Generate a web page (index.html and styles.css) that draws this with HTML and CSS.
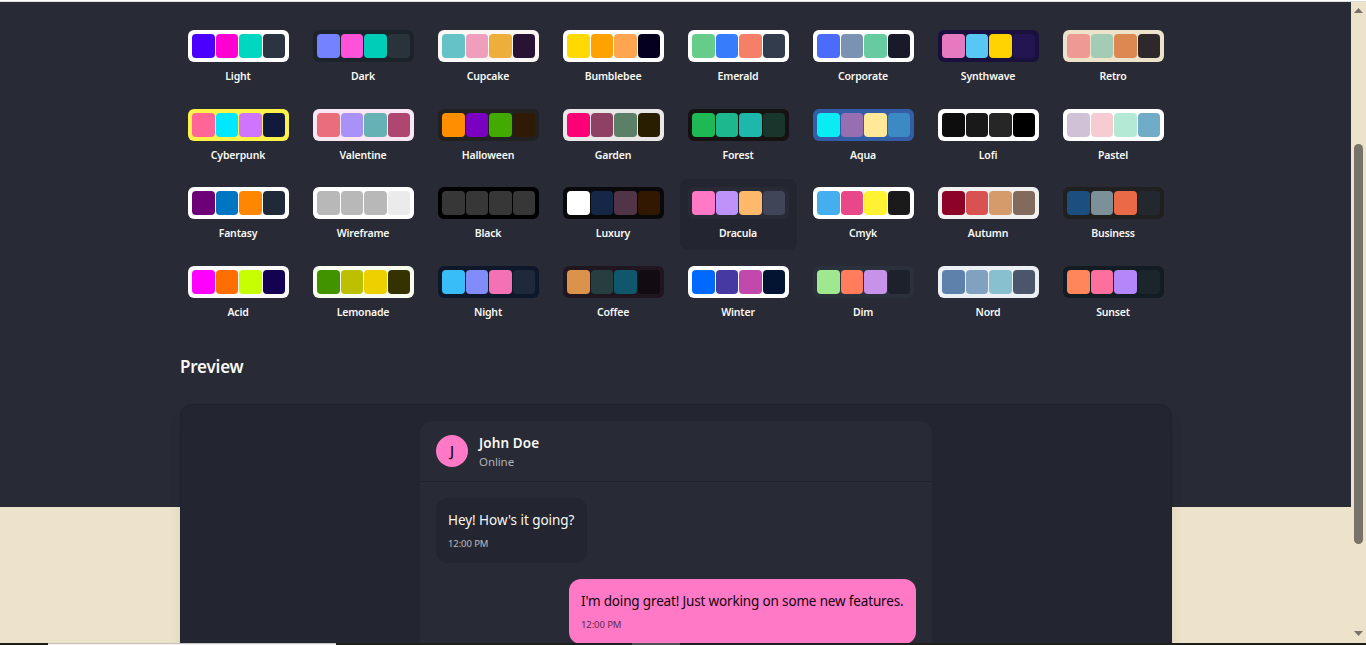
FILE: index.html
```html
<!DOCTYPE html>
<html lang="en">
<head>
<meta charset="utf-8">
<title>Theme settings</title>
<link rel="stylesheet" href="styles.css">
</head>
<body>
<div class="topline"></div>
<div class="window">
<div class="page">
<main class="settings">
<section class="themes">
<button class="theme light"><span class="swatch"><i></i><i></i><i></i><i></i></span><span class="label">Light</span></button>
<button class="theme dark"><span class="swatch"><i></i><i></i><i></i><i></i></span><span class="label">Dark</span></button>
<button class="theme cupcake"><span class="swatch"><i></i><i></i><i></i><i></i></span><span class="label">Cupcake</span></button>
<button class="theme bumblebee"><span class="swatch"><i></i><i></i><i></i><i></i></span><span class="label">Bumblebee</span></button>
<button class="theme emerald"><span class="swatch"><i></i><i></i><i></i><i></i></span><span class="label">Emerald</span></button>
<button class="theme corporate"><span class="swatch"><i></i><i></i><i></i><i></i></span><span class="label">Corporate</span></button>
<button class="theme synthwave"><span class="swatch"><i></i><i></i><i></i><i></i></span><span class="label">Synthwave</span></button>
<button class="theme retro"><span class="swatch"><i></i><i></i><i></i><i></i></span><span class="label">Retro</span></button>
<button class="theme cyberpunk"><span class="swatch"><i></i><i></i><i></i><i></i></span><span class="label">Cyberpunk</span></button>
<button class="theme valentine"><span class="swatch"><i></i><i></i><i></i><i></i></span><span class="label">Valentine</span></button>
<button class="theme halloween"><span class="swatch"><i></i><i></i><i></i><i></i></span><span class="label">Halloween</span></button>
<button class="theme garden"><span class="swatch"><i></i><i></i><i></i><i></i></span><span class="label">Garden</span></button>
<button class="theme forest"><span class="swatch"><i></i><i></i><i></i><i></i></span><span class="label">Forest</span></button>
<button class="theme aqua"><span class="swatch"><i></i><i></i><i></i><i></i></span><span class="label">Aqua</span></button>
<button class="theme lofi"><span class="swatch"><i></i><i></i><i></i><i></i></span><span class="label">Lofi</span></button>
<button class="theme pastel"><span class="swatch"><i></i><i></i><i></i><i></i></span><span class="label">Pastel</span></button>
<button class="theme fantasy"><span class="swatch"><i></i><i></i><i></i><i></i></span><span class="label">Fantasy</span></button>
<button class="theme wireframe"><span class="swatch"><i></i><i></i><i></i><i></i></span><span class="label">Wireframe</span></button>
<button class="theme black"><span class="swatch"><i></i><i></i><i></i><i></i></span><span class="label">Black</span></button>
<button class="theme luxury"><span class="swatch"><i></i><i></i><i></i><i></i></span><span class="label">Luxury</span></button>
<button class="theme dracula selected"><span class="swatch"><i></i><i></i><i></i><i></i></span><span class="label">Dracula</span></button>
<button class="theme cmyk"><span class="swatch"><i></i><i></i><i></i><i></i></span><span class="label">Cmyk</span></button>
<button class="theme autumn"><span class="swatch"><i></i><i></i><i></i><i></i></span><span class="label">Autumn</span></button>
<button class="theme business"><span class="swatch"><i></i><i></i><i></i><i></i></span><span class="label">Business</span></button>
<button class="theme acid"><span class="swatch"><i></i><i></i><i></i><i></i></span><span class="label">Acid</span></button>
<button class="theme lemonade"><span class="swatch"><i></i><i></i><i></i><i></i></span><span class="label">Lemonade</span></button>
<button class="theme night"><span class="swatch"><i></i><i></i><i></i><i></i></span><span class="label">Night</span></button>
<button class="theme coffee"><span class="swatch"><i></i><i></i><i></i><i></i></span><span class="label">Coffee</span></button>
<button class="theme winter"><span class="swatch"><i></i><i></i><i></i><i></i></span><span class="label">Winter</span></button>
<button class="theme dim"><span class="swatch"><i></i><i></i><i></i><i></i></span><span class="label">Dim</span></button>
<button class="theme nord"><span class="swatch"><i></i><i></i><i></i><i></i></span><span class="label">Nord</span></button>
<button class="theme sunset"><span class="swatch"><i></i><i></i><i></i><i></i></span><span class="label">Sunset</span></button>
</section>
<h3 class="heading"><span>Preview</span></h3>
<section class="preview">
<div class="chat">
<header class="chat-head">
<div class="avatar">J</div>
<div class="who"><span class="name">John Doe</span><span class="status">Online</span></div>
</header>
<div class="messages">
<div class="bubble"><span class="text">Hey! How's it going?</span><span class="time">12:00 PM</span></div>
<div class="bubble mine"><span class="text">I'm doing great! Just working on some new features.</span><span class="time">12:00 PM</span></div>
</div>
</div>
</section>
</main>
</div>
<aside class="scrollbar">
<svg width="9" height="5" viewBox="0 0 9 5"><path d="M4.5 0L9 5H0Z" fill="#78736a"/></svg>
<div class="track"><div class="thumb"></div></div>
<svg width="9" height="5" viewBox="0 0 9 5"><path d="M0 0H9L4.5 5Z" fill="#78736a"/></svg>
</aside>
</div>
<footer class="taskbar"><div class="task-search"></div><div class="task-active"></div></footer>
</body>
</html>
```
FILE: styles.css
```css
* { box-sizing: border-box; }
body {
  margin: 0;
  height: 645px;
  overflow: hidden;
  display: flex;
  flex-direction: column;
  background: #ece3ca;
  color: #f8f8f2;
  font-family: "Noto Sans", "Open Sans", sans-serif;
}
.topline { flex: none; height: 2px; background: #fff; border-bottom: 1px solid #dcdde0; }
.window { flex: none; height: 641px; display: flex; overflow: hidden; }
.page {
  width: 1351px;
  height: 641px;
  overflow: hidden;
  background: linear-gradient(#282a36 505px, #ece3ca 505px);
}
.settings { width: 992px; margin: 0 auto 0 180px; padding-top: 20px; }

/* Theme picker */
.themes { display: grid; grid-template-columns: repeat(8, 1fr); gap: 8px; }
.theme {
  display: flex;
  flex-direction: column;
  gap: 6px;
  height: 70.67px;
  padding: 8px;
  border: 0;
  border-radius: 8px;
  background: none;
  color: inherit;
  font: inherit;
}
.theme.selected { background: #232530; }
.swatch {
  width: 100%;
  height: 32px;
  padding: 4px;
  display: grid;
  grid-template-columns: repeat(4, 1fr);
  gap: 1px;
  border-radius: 6px;
  background: var(--base);
}
.swatch i { border-radius: 4px; }
.swatch i:nth-child(1) { background: var(--primary); }
.swatch i:nth-child(2) { background: var(--secondary); }
.swatch i:nth-child(3) { background: var(--accent); }
.swatch i:nth-child(4) { background: var(--neutral); }
.label {
  width: 100%;
  padding-right: 1px;
  text-align: center;
  font-size: 10.5px;
  line-height: 16.5px;
  font-weight: 600;
  letter-spacing: -0.17px;
}

.light { --base: #fff; --primary: #4b00ff; --secondary: #ff00d3; --accent: #00d7c0; --neutral: #2b3440; }
.dark { --base: #1d232a; --primary: #7582ff; --secondary: #ff52d9; --accent: #00cdb8; --neutral: #2a323c; }
.cupcake { --base: #faf7f5; --primary: #65c3c8; --secondary: #ef9fbc; --accent: #eeaf3a; --neutral: #291334; }
.bumblebee { --base: #fff; --primary: #ffd900; --secondary: #ffa200; --accent: #ffa552; --neutral: #05001f; }
.emerald { --base: #fff; --primary: #66cc8a; --secondary: #377cfb; --accent: #f68067; --neutral: #333c4d; }
.corporate { --base: #fff; --primary: #4b6bfb; --secondary: #7b92b2; --accent: #67cba0; --neutral: #181a2a; }
.synthwave { --base: #1a103d; --primary: #e779c1; --secondary: #58c7f3; --accent: #ffd200; --neutral: #221551; }
.retro { --base: #ece3ca; --primary: #ef9995; --secondary: #a4cbb4; --accent: #dc8850; --neutral: #2e282a; }
.cyberpunk { --base: #fff248; --primary: #ff6596; --secondary: #00e8ff; --accent: #ce74ff; --neutral: #111a3b; }
.valentine { --base: #fae7f4; --primary: #e96d7b; --secondary: #a991f7; --accent: #66b1b3; --neutral: #af4670; }
.halloween { --base: #212121; --primary: #ff8f00; --secondary: #7a00c2; --accent: #42aa00; --neutral: #2f1b05; }
.garden { --base: #e9e7e7; --primary: #fe0075; --secondary: #8e4162; --accent: #5c7f67; --neutral: #291e00; }
.forest { --base: #171212; --primary: #1eb854; --secondary: #1db88e; --accent: #1db8ab; --neutral: #19362d; }
.aqua { --base: #345da7; --primary: #09ecf3; --secondary: #966fb3; --accent: #ffe999; --neutral: #3b8ac4; }
.lofi { --base: #fff; --primary: #0d0d0d; --secondary: #1a1919; --accent: #262626; --neutral: #000; }
.pastel { --base: #fff; --primary: #d1c1d7; --secondary: #f6cbd1; --accent: #b4e9d6; --neutral: #70acc7; }
.fantasy { --base: #fff; --primary: #6d0076; --secondary: #0075c2; --accent: #ff8600; --neutral: #1f2937; }
.wireframe { --base: #fff; --primary: #b8b8b8; --secondary: #b8b8b8; --accent: #b8b8b8; --neutral: #ebebeb; }
.black { --base: #000; --primary: #373737; --secondary: #373737; --accent: #373737; --neutral: #373737; }
.luxury { --base: #09090b; --primary: #fff; --secondary: #152747; --accent: #513448; --neutral: #331800; }
.dracula { --base: #282a36; --primary: #ff79c6; --secondary: #bd93f9; --accent: #ffb86c; --neutral: #414558; }
.cmyk { --base: #fff; --primary: #45aeee; --secondary: #e8488a; --accent: #fff232; --neutral: #1a1a1a; }
.autumn { --base: #f1f1f1; --primary: #8c0327; --secondary: #d85251; --accent: #d59b6a; --neutral: #826a5c; }
.business { --base: #202020; --primary: #1c4e80; --secondary: #7c909a; --accent: #ea6947; --neutral: #23282f; }
.acid { --base: #fafafa; --primary: #ff00ff; --secondary: #ff6e00; --accent: #c8ff00; --neutral: #140151; }
.lemonade { --base: #f8fdef; --primary: #419400; --secondary: #bdc000; --accent: #edd000; --neutral: #343300; }
.night { --base: #0f172a; --primary: #38bdf8; --secondary: #818cf8; --accent: #f471b5; --neutral: #1e293b; }
.coffee { --base: #20161f; --primary: #db924b; --secondary: #263e3f; --accent: #10576d; --neutral: #120c12; }
.winter { --base: #fff; --primary: #0069ff; --secondary: #463aa2; --accent: #c148ac; --neutral: #021431; }
.dim { --base: #2a303c; --primary: #9fe88d; --secondary: #ff7d5c; --accent: #c792e9; --neutral: #1c212b; }
.nord { --base: #eceff4; --primary: #5e81ac; --secondary: #81a1c1; --accent: #88c0d0; --neutral: #4c566a; }
.sunset { --base: #121c22; --primary: #ff865b; --secondary: #fd6f9c; --accent: #b387fa; --neutral: #1b262c; }

/* Chat preview */
.heading {
  margin: 24px 0 23.33px;
  font-size: 17px;
  line-height: 28px;
  font-weight: 600;
  letter-spacing: -0.2px;
}
.preview {
  height: 420px;
  padding-top: 16px;
  border: 1px solid #20222c;
  border-radius: 12px;
  background: #232530;
  box-shadow: 0 10px 15px -3px rgba(0, 0, 0, .1), 0 4px 6px -4px rgba(0, 0, 0, .1);
}
.chat { width: 512px; height: 400px; margin: 0 auto; border-radius: 12px; background: #282a36; overflow: hidden; }
.chat-head {
  display: flex;
  align-items: center;
  gap: 11px;
  height: 61px;
  padding: 0 16px;
  border-bottom: 1px solid #20222c;
}
.avatar {
  width: 32px;
  height: 32px;
  border-radius: 50%;
  background: #ff79c6;
  color: #16050e;
  text-align: center;
  font-size: 14px;
  line-height: 32px;
  font-weight: 500;
}
.who { display: flex; flex-direction: column; align-items: flex-start; padding-top: 2px; }
.name { font-size: 13.5px; line-height: 20px; font-weight: 600; letter-spacing: 0.1px; }
.status { font-size: 11.5px; line-height: 17px; letter-spacing: -0.1px; color: #b0b1b3; }
.messages { display: flex; flex-direction: column; align-items: flex-start; gap: 16px; padding: 16px; }
.bubble {
  display: flex;
  flex-direction: column;
  align-items: flex-start;
  gap: 6px;
  width: 151px;
  height: 65px;
  padding: 12px;
  border-radius: 12px;
  background: #232530;
  white-space: nowrap;
}
.bubble.mine { align-self: flex-end; width: 347px; background: #ff79c6; color: #16050e; }
.text { font-size: 13.5px; line-height: 20px; letter-spacing: -0.05px; }
.mine .text { letter-spacing: -0.16px; }
.time { font-size: 9.5px; line-height: 15px; letter-spacing: -0.1px; opacity: .7; }

/* Window chrome */
.scrollbar {
  width: 15px;
  height: 641px;
  padding: 6px 0 7px 3px;
  display: flex;
  flex-direction: column;
  align-items: flex-start;
  background: #ece3ca;
}
.scrollbar svg { display: block; flex: none; }
.track { flex: 1; padding-top: 131px; }
.thumb { width: 9px; height: 400px; border-radius: 5px; background: #78736a; }
.taskbar { flex: none; height: 2px; display: flex; background: #201e1d; }
.task-search { width: 288px; margin-left: 48px; background: #f5f3f5; border-top: 1px solid #c8c0bc; }
.task-active { width: 48px; margin-left: 296px; background: #525150; }
```
